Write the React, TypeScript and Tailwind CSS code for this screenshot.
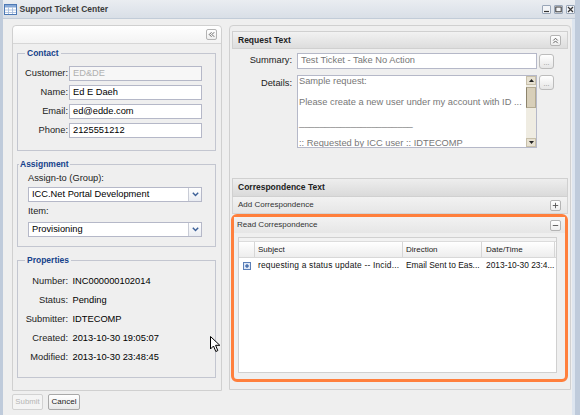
import React from 'react'

function ToolBtn({ children }: { children: React.ReactNode }) {
    return (
        <span className="flex h-[11px] w-[11px] items-center justify-center rounded-[2px] border border-[#b4b4b4] bg-linear-to-b from-white to-[#eeeeee]">
            <svg width="9" height="9" viewBox="0 0 10 10" fill="none">
                {children}
            </svg>
        </span>
    )
}

function DotsBtn() {
    return (
        <span className="ml-[2px] flex h-[15px] w-[15px] items-end justify-center rounded-[3px] border border-[#bcbcbc] bg-linear-to-b from-white to-[#e6e6e6] pb-[2px] text-[7px] leading-[7px] text-[#8a8a8a]">
            ...
        </span>
    )
}

function Legend({ title, className }: { title: string; className: string }) {
    return (
        <legend
            className={`text-[8.5px] leading-[10px] font-bold text-[#15428b] ${className}`}
        >
            {title}
        </legend>
    )
}

function TextRow({
    label,
    value,
    disabled
}: {
    label: string
    value: string
    disabled?: boolean
}) {
    return (
        <div className="flex h-[15px] items-center">
            <span className="w-[50px] text-right text-[9.3px] text-[#222]">
                {label}
            </span>
            <div
                className={`ml-[1px] flex h-[15px] w-[133px] items-center border border-[#b5b8c8] pl-[3px] text-[9.3px] ${
                    disabled
                        ? 'bg-[#f7f7f7] text-[#b0b0b0]'
                        : 'bg-white text-black'
                }`}
            >
                {value}
            </div>
        </div>
    )
}

function Combo({ value, className }: { value: string; className: string }) {
    return (
        <div
            className={`flex h-[15px] w-[174px] border border-[#b5b8c8] bg-white ${className}`}
        >
            <span className="flex flex-1 items-center pl-[3px] text-[9.3px] text-black">
                {value}
            </span>
            <span className="flex w-[13px] items-center justify-center border-l border-[#c9ccd6] bg-linear-to-b from-white to-[#e9ecf2]">
                <svg width="7" height="5" viewBox="0 0 7 5" fill="none">
                    <path
                        d="M0.8 0.8 L3.5 3.6 L6.2 0.8"
                        stroke="#3b5f97"
                        strokeWidth="1.4"
                    />
                </svg>
            </span>
        </div>
    )
}

function PropRow({ label, value }: { label: string; value: string }) {
    return (
        <div className="flex h-[19px] items-center text-[9.3px]">
            <span className="w-[50px] text-right text-[#222]">{label}</span>
            <span className="ml-[4.5px] text-black">{value}</span>
        </div>
    )
}

function TitleBar() {
    return (
        <div className="flex h-[19px] items-center border-b border-[#c2ccd8] bg-linear-to-b from-[#eaedf1] to-[#d9dfe7] pl-[0.5px]">
            <svg width="13" height="11" viewBox="0 0 13 11">
                <rect
                    x="0.5"
                    y="0.5"
                    width="12"
                    height="10"
                    fill="#ffffff"
                    stroke="#4d79b5"
                />
                <rect x="1" y="1" width="11" height="2.5" fill="#86a8d6" />
                <path
                    d="M1 6 H12 M1 8.5 H12 M4.5 3.5 V10 M8.5 3.5 V10"
                    stroke="#9fb7da"
                    strokeWidth="0.8"
                />
            </svg>
            <span className="ml-[3px] text-[8.5px] font-bold text-[#3a3a3a]">
                Support Ticket Center
            </span>
            <div className="ml-auto flex gap-[3px]">
                {['min', 'max', 'close'].map(k => (
                    <span
                        key={k}
                        className="flex h-[9px] w-[9px] items-center justify-center rounded-[1px] border border-[#99a6b8] bg-[#f3f5f8]"
                    >
                        <svg width="7" height="7" viewBox="0 0 7 7" fill="none">
                            {k === 'min' && (
                                <path d="M1 5.5 H6" stroke="#333" strokeWidth="1.2" />
                            )}
                            {k === 'max' && (
                                <rect
                                    x="0.8"
                                    y="1"
                                    width="5.4"
                                    height="4.8"
                                    stroke="#333"
                                    strokeWidth="1"
                                />
                            )}
                            {k === 'close' && (
                                <path
                                    d="M1 1 L6 6 M6 1 L1 6"
                                    stroke="#333"
                                    strokeWidth="1.2"
                                />
                            )}
                        </svg>
                    </span>
                ))}
            </div>
        </div>
    )
}

function LeftPanel() {
    return (
        <div className="flex h-[366px] w-[210px] flex-col rounded-t-[4px] border border-[#d0d0d0] bg-[#efefef]">
            <div className="flex h-[18px] items-center justify-end rounded-t-[4px] border-b border-[#d6d6d6] bg-linear-to-b from-white to-[#f3f3f3] pr-[4px]">
                <ToolBtn>
                    <path
                        d="M5 2.5 L2.5 5 L5 7.5 M8 2.5 L5.5 5 L8 7.5"
                        stroke="#555"
                    />
                </ToolBtn>
            </div>

            <fieldset className="mt-[4px] ml-[4px] w-[199px] border border-[#c3c6d0] pt-[9px] pb-[12px]">
                <Legend title="Contact" className="ml-[7px] px-[2px]" />
                <div className="-mt-[1px] flex flex-col gap-[4px]">
                    <TextRow label="Customer:" value="ED&DE" disabled />
                    <TextRow label="Name:" value="Ed E Daeh" />
                    <TextRow label="Email:" value="ed@edde.com" />
                    <TextRow label="Phone:" value="2125551212" />
                </div>
            </fieldset>

            <fieldset className="mt-[8px] ml-[4px] w-[199px] border border-[#c3c6d0] pb-[9px] pl-[10px]">
                <Legend title="Assignment" className="-ml-[9px] px-[1px]" />
                <div className="pt-[4px] text-[9.3px] leading-[11px] text-[#222]">
                    Assign-to (Group):
                </div>
                <Combo value="ICC.Net Portal Development" className="mt-[3px]" />
                <div className="mt-[4px] text-[9.3px] leading-[11px] text-[#222]">
                    Item:
                </div>
                <Combo value="Provisioning" className="mt-[5px]" />
            </fieldset>

            <fieldset className="mt-[8px] ml-[4px] w-[199px] border border-[#c3c6d0] pt-[7px] pb-[10px]">
                <Legend title="Properties" className="ml-[7px] px-[2px]" />
                <PropRow label="Number:" value="INC000000102014" />
                <PropRow label="Status:" value="Pending" />
                <PropRow label="Submitter:" value="IDTECOMP" />
                <PropRow label="Created:" value="2013-10-30 19:05:07" />
                <PropRow label="Modified:" value="2013-10-30 23:48:45" />
            </fieldset>
        </div>
    )
}

const detailLines = [
    'Sample request:',
    ' ',
    'Please create a new user under my account with ID ...',
    ' ',
    '______________________',
    ' ',
    ':: Requested by ICC user :: IDTECOMP'
]

function Scrollbar() {
    return (
        <div className="flex w-[10px] flex-col bg-[#efece2]">
            <div className="flex h-[9px] items-center justify-center border border-[#c8c0aa] bg-[#e7e1d1]">
                <svg width="5" height="3" viewBox="0 0 5 3">
                    <path d="M0 3 L2.5 0 L5 3 Z" fill="#222" />
                </svg>
            </div>
            <div className="mt-[2px] h-[21px] border border-[#b3aa92] border-l-[#8d846c] bg-[#d8cfb9]" />
            <div className="flex-1" />
            <div className="flex h-[9px] items-center justify-center border border-[#c8c0aa] bg-[#e7e1d1]">
                <svg width="5" height="3" viewBox="0 0 5 3">
                    <path d="M0 0 L2.5 3 L5 0 Z" fill="#222" />
                </svg>
            </div>
        </div>
    )
}

function RightPanel() {
    return (
        <div className="flex h-[365px] flex-1 flex-col rounded-t-[4px] border border-[#d0d0d0] bg-[#efefef] px-[2px] pt-[5px]">
            <div className="flex h-[18px] items-center border border-[#d0d0d0] bg-linear-to-b from-[#f2f2f2] to-[#dddddd] pr-[6px] pl-[5px]">
                <span className="text-[8.5px] font-bold text-[#222]">
                    Request Text
                </span>
                <span className="ml-auto">
                    <ToolBtn>
                        <path
                            d="M2.5 5 L5 2.5 L7.5 5 M2.5 8 L5 5.5 L7.5 8"
                            stroke="#555"
                        />
                    </ToolBtn>
                </span>
            </div>

            <div className="mt-[4px] flex h-[16px] items-center">
                <span className="w-[60px] text-right text-[9.3px] text-[#222]">
                    Summary:
                </span>
                <div className="ml-[5px] flex h-[16px] w-[240px] items-center border border-[#b5b8c8] bg-white pl-[3px] text-[9.3px] text-[#777]">
                    Test Ticket - Take No Action
                </div>
                <DotsBtn />
            </div>

            <div className="mt-[6px] flex h-[73px] items-start">
                <span className="w-[60px] pt-[3px] text-right text-[9.3px] leading-[10px] text-[#222]">
                    Details:
                </span>
                <div className="ml-[5px] flex h-[73px] w-[240px] border border-[#b5b8c8] bg-white">
                    <div className="flex-1 overflow-hidden pl-[1px] text-[9.3px] leading-[10.4px] whitespace-pre text-[#777]">
                        {detailLines.map((l, i) => (
                            <div key={i}>{l}</div>
                        ))}
                    </div>
                    <Scrollbar />
                </div>
                <DotsBtn />
            </div>

            <div className="mt-[30px] flex flex-col">
                <div className="flex h-[19px] items-center border border-[#d0d0d0] bg-linear-to-b from-[#eeeeee] to-[#dadada] pl-[5px]">
                    <span className="text-[8.5px] font-bold text-[#222]">
                        Correspondence Text
                    </span>
                </div>
                <div className="flex h-[17px] items-center border-x border-b border-[#d4d4d4] bg-linear-to-b from-[#f2f2f2] to-[#e6e6e6] pr-[6px] pl-[5px]">
                    <span className="text-[8px] text-[#333]">
                        Add Correspondence
                    </span>
                    <span className="ml-auto">
                        <ToolBtn>
                            <path d="M2 5 H8 M5 2 V8" stroke="#555" />
                        </ToolBtn>
                    </span>
                </div>

                <div className="-ml-[1px] flex flex-col rounded-[6px] border-[3px] border-[#ff7f3c]">
                    <div className="flex h-[16px] items-center bg-linear-to-b from-[#f2f2f2] to-[#e6e6e6] pr-[4px] pl-[3px]">
                        <span className="text-[8px] text-[#333]">
                            Read Correspondence
                        </span>
                        <span className="ml-auto">
                            <ToolBtn>
                                <path d="M2 5 H8" stroke="#555" />
                            </ToolBtn>
                        </span>
                    </div>
                    <div className="pt-[4px] pr-[8px] pb-[6px] pl-[4px]">
                        <div className="flex h-[136px] w-[319px] flex-col border border-[#d0d0d0] bg-white">
                            <div className="h-[4px] border-b border-[#dcdcdc] bg-[#f2f2f2]" />
                            <div className="flex h-[16px] border-b border-[#d8d8d8] bg-linear-to-b from-white to-[#ededed] text-[8px] text-[#222]">
                                <span className="w-[16px] border-r border-[#d6d6d6]" />
                                <span className="flex w-[148px] items-center border-r border-[#d6d6d6] pl-[3px]">
                                    Subject
                                </span>
                                <span className="flex w-[79px] items-center border-r border-[#d6d6d6] pl-[3px]">
                                    Direction
                                </span>
                                <span className="flex w-[73px] items-center border-r border-[#d6d6d6] pl-[4px]">
                                    Date/Time
                                </span>
                            </div>
                            <div className="flex h-[15px] items-center text-[8.4px] whitespace-nowrap text-[#111]">
                                <span className="flex w-[16px] justify-center">
                                    <svg width="8" height="8" viewBox="0 0 8 8">
                                        <rect
                                            x="0.5"
                                            y="0.5"
                                            width="7"
                                            height="7"
                                            fill="#dfe8f6"
                                            stroke="#5b7fb8"
                                        />
                                        <path
                                            d="M2 4 H6 M4 2 V6"
                                            stroke="#1f4f99"
                                            strokeWidth="1"
                                        />
                                    </svg>
                                </span>
                                <span className="w-[148px] overflow-hidden pl-[3px] tracking-[0.2px]">
                                    requesting a status update -- Incid...
                                </span>
                                <span className="w-[79px] overflow-hidden pl-[3px]">
                                    Email Sent to Eas...
                                </span>
                                <span className="w-[73px] pl-[4px]">
                                    2013-10-30 23:4...
                                </span>
                            </div>
                        </div>
                    </div>
                </div>
            </div>
        </div>
    )
}

export default function App() {
    return (
        <div className="relative flex h-[415px] w-[580px] flex-col overflow-hidden border-r-[5px] border-l-[3px] border-[#bfcbdb] bg-[#efefef] font-[Liberation_Sans,Arial,sans-serif] text-black">
            <TitleBar />
            <div className="flex flex-1">
                <div className="flex flex-1 flex-col pt-[6px] pr-[1px] pl-[9px]">
                    <div className="flex gap-[7px]">
                        <LeftPanel />
                        <RightPanel />
                    </div>
                    <div className="mt-[3px] flex gap-[5px]">
                        <span className="flex h-[16px] w-[31px] items-center justify-center rounded-[2px] border border-[#d2d2d2] bg-[#f4f4f4] text-[7.8px] text-[#b4b4b4]">
                            Submit
                        </span>
                        <span className="flex h-[16px] w-[32px] items-center justify-center rounded-[2px] border border-[#a8a8a8] bg-linear-to-b from-white to-[#e8e8e8] text-[8px] text-[#222]">
                            Cancel
                        </span>
                    </div>
                </div>
                <div className="w-[3px] bg-[#dde5ef]" />
            </div>
            <svg
                className="absolute top-[336px] left-[207px]"
                width="11"
                height="17"
                viewBox="0 0 11 17"
            >
                <path
                    d="M0.5 0.5 L0.5 13 L3.5 10 L5.8 15.5 L7.8 14.6 L5.6 9.3 L9.8 9.3 Z"
                    fill="#ffffff"
                    stroke="#000000"
                    strokeWidth="1"
                />
            </svg>
        </div>
    )
}
